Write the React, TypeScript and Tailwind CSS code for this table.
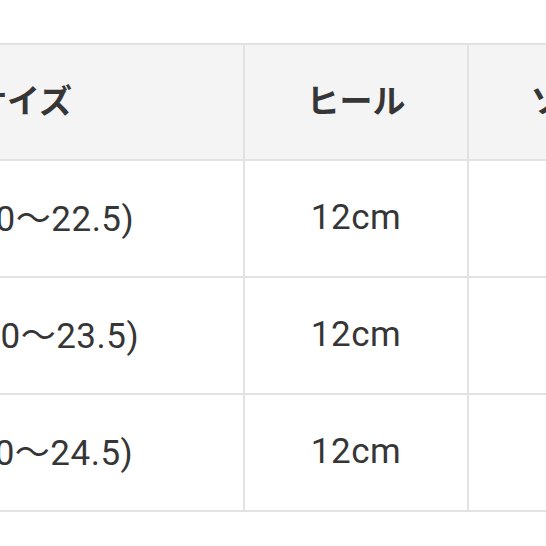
// Size chart table, cropped view
const rows = [
  { size: 'S(22.0〜22.5)', heel: '12cm', third: '' },
  { size: 'M(23.0〜23.5)', heel: '12cm', third: '' },
  { size: 'L(24.0〜24.5)', heel: '12cm', third: '' },
]

export default function App() {
  return (
    <div className="w-[546px] h-[546px] overflow-hidden bg-white pt-[43px]" style={{ fontFamily: 'Roboto, "Noto Sans CJK JP", sans-serif' }}>
      <table className="ml-[-199px] w-[890px] min-w-[890px] border-collapse table-fixed text-[#363636]">
        <colgroup>
          <col className="w-[442px]" />
          <col className="w-[224px]" />
          <col className="w-[224px]" />
        </colgroup>
        <thead>
          <tr className="bg-[#f4f4f4] h-[116px]">
            <th className="border-2 border-[#e2e2e2] text-[33px] font-bold text-center">サイズ</th>
            <th className="border-2 border-[#e2e2e2] text-[33px] font-bold text-center">ヒール</th>
            <th className="border-2 border-[#e2e2e2] text-[33px] font-bold text-center">ソール</th>
          </tr>
        </thead>
        <tbody>
          {rows.map((r) => (
            <tr key={r.size} className="h-[117px]">
              <td className="border-2 border-[#e2e2e2] text-[35px] tracking-[0.5px] text-center whitespace-nowrap">
                {r.size.split('〜')[0]}
                <span style={{ fontFamily: '"Noto Sans CJK JP", sans-serif' }}>〜</span>
                {r.size.split('〜')[1]}
              </td>
              <td className="border-2 border-[#e2e2e2] text-[35px] tracking-[0.5px] text-center">{r.heel}</td>
              <td className="border-2 border-[#e2e2e2] text-[35px] text-center">{r.third}</td>
            </tr>
          ))}
        </tbody>
      </table>
    </div>
  )
}
